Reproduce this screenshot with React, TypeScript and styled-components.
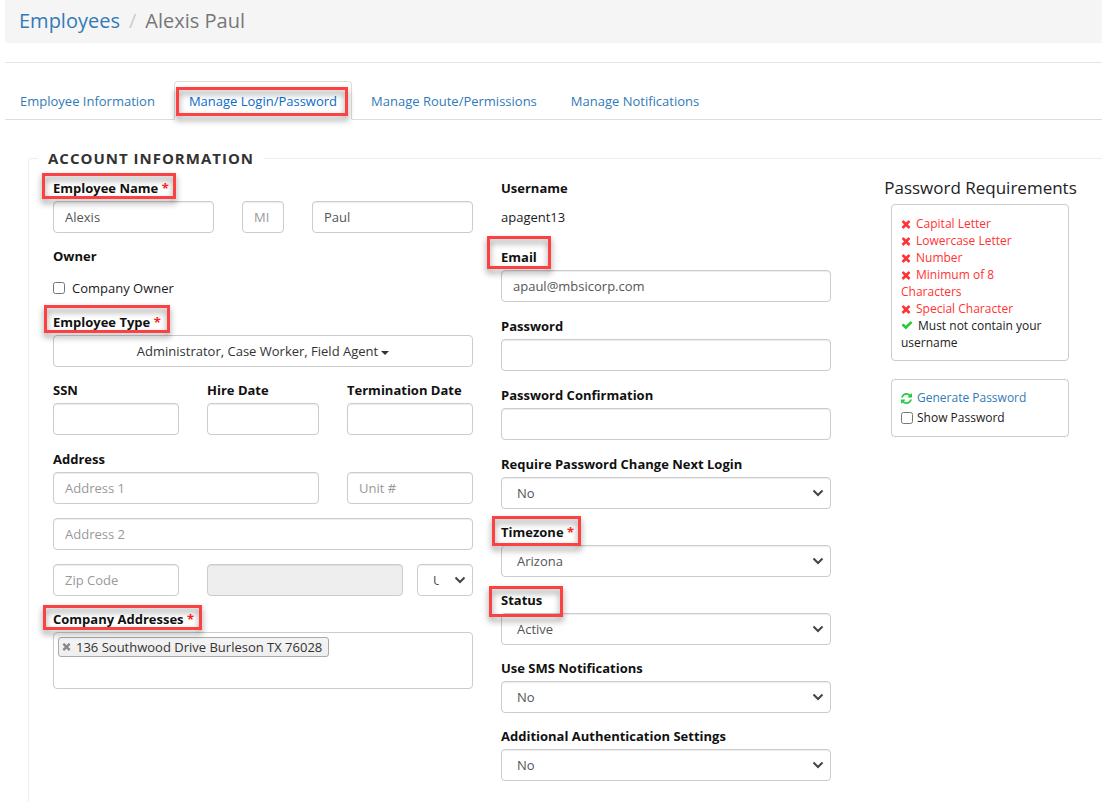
import React from "react";
import styled, { createGlobalStyle, css } from "styled-components";

const GlobalStyle = createGlobalStyle`
  *, *::before, *::after { box-sizing: border-box; }
  body {
    margin: 0;
    background: #fff;
    color: #1a1a1a;
    font-family: "Open Sans", "Liberation Sans", sans-serif;
    font-size: 13px;
    line-height: 20px;
  }
  input, select, button { font: inherit; }
  a { color: #337ab7; text-decoration: none; }
`;

/* ---------- page header ---------- */

const Page = styled.div`
  padding-left: 5px;
`;

const Breadcrumb = styled.nav`
  display: flex;
  gap: 9px;
  padding: 7px 14px 8px;
  background: #f5f5f5;
  border-radius: 0 0 0 4px;
  color: #777;
  font-size: 20px;
  line-height: 28px;
`;

const Slash = styled.span`
  color: #ccc;
`;

const Divider = styled.hr`
  height: 1px;
  margin: 19px 0 18px;
  border: 0;
  background: #e5e5e5;
`;

const Tabs = styled.nav`
  display: flex;
  gap: 4px;
  border-bottom: 1px solid #ddd;
`;

const Tab = styled.a<{ $active?: boolean }>`
  position: relative;
  margin-bottom: -1px;
  padding: 9px 14px 8px;
  border: 1px solid transparent;
  border-radius: 4px 4px 0 0;
  ${(p) =>
    p.$active &&
    css`
      color: #0a6ccb;
      background: #fff;
      border-color: #ddd #ddd #fff;
    `}
`;

/* ---------- form structure ---------- */

const Account = styled.fieldset`
  min-width: 0;
  margin: 28px 0 0 23px;
  padding: 9px 0 9px 9px;
  border: 1px solid #eee;
  border-right: 0;
  border-bottom: 0;
  border-radius: 4px 0 0 0;
`;

const Legend = styled.legend`
  padding: 0 10px;
  color: #333;
  font-size: 15px;
  font-weight: 700;
  letter-spacing: 1px;
  text-transform: uppercase;
`;

const Columns = styled.div`
  display: grid;
  grid-template-columns: minmax(0, 420fr) minmax(0, 330fr) minmax(0, 243fr);
  gap: 28px;
  margin-left: 15px;
`;

const Column = styled.div``;

const Row = styled.div<{ $tight?: boolean }>`
  display: flex;
  gap: ${(p) => (p.$tight ? 14 : 28)}px;
`;

const Stack = styled.div`
  display: flex;
  flex-direction: column;
  gap: 14px;
`;

const Cell = styled.div<{ $span: number }>`
  flex: ${(p) => p.$span} 1 0;
  min-width: 0;
`;

const Field = styled.div<{ $gap?: number }>`
  margin-bottom: ${(p) => p.$gap ?? 12}px;
`;

const labelStyle = css`
  position: relative;
  display: table;
  margin: 0 0 2px;
  color: #111;
  font-weight: 700;
  line-height: 22px;
`;

const Label = styled.label`
  ${labelStyle}
`;

const Caption = styled.div`
  ${labelStyle}
`;

const Star = styled.span`
  color: #f22;
`;

const boxStyle = css`
  display: block;
  width: 100%;
  height: 32px;
  border: 1px solid #ccc;
  border-radius: 4px;
  background: #fff;
  color: #555;
`;

const Input = styled.input`
  ${boxStyle}
  padding: 5px 11px;
  box-shadow: inset 0 1px 1px rgba(0, 0, 0, 0.075);
  &::placeholder { color: #999; opacity: 1; }
  &:disabled { background: #eee; }
`;

const SelectWrap = styled.div`
  position: relative;
`;

const SelectControl = styled.select`
  ${boxStyle}
  appearance: none;
  padding: 5px 33px 5px 15px;
  box-shadow: inset 0 1px 1px rgba(0, 0, 0, 0.075);
`;

const Chevron = styled.svg`
  position: absolute;
  top: 12px;
  right: 7px;
  fill: none;
  stroke: #444;
  stroke-width: 2;
  pointer-events: none;
`;

const TypeButton = styled.button`
  ${boxStyle}
  padding: 5px 12px;
  color: #333;
`;

const Caret = styled.span`
  display: inline-block;
  margin-left: 3px;
  vertical-align: middle;
  border-top: 4px solid;
  border-left: 4px solid transparent;
  border-right: 4px solid transparent;
`;

const StaticText = styled.p`
  margin: 0;
  padding: 6px 0;
`;

const CheckLabel = styled.label`
  display: flex;
  align-items: center;
  gap: 7px;
  padding: 9px 0;
`;

const Checkbox = styled.input`
  width: 12px;
  height: 12px;
  margin: 0;
`;

const TagBox = styled.div`
  min-height: 57px;
  padding: 3px 4px;
  border: 1px solid #ccc;
  border-radius: 4px;
`;

const Tag = styled.span`
  display: inline-flex;
  align-items: center;
  height: 20px;
  padding: 0 6px 0 3px;
  border: 1px solid #aaa;
  border-radius: 3px;
  background: linear-gradient(#f4f4f4, #eee);
  color: #333;
  line-height: 18px;
`;

const TagRemove = styled.button`
  display: flex;
  padding: 0;
  border: 0;
  background: none;
  color: #888;
`;

/* ---------- password sidebar ---------- */

const SideTitle = styled.h2`
  margin: 0 0 5px;
  color: #222;
  font-size: 17px;
  font-weight: 400;
  line-height: 22px;
  text-align: center;
`;

const Panel = styled.div<{ $tight?: boolean }>`
  margin: 0 33px 18px 32px;
  padding: ${(p) => (p.$tight ? "8px 9px" : "10px 14px 9px 9px")};
  border: 1px solid #ccc;
  border-radius: 4px;
  font-size: 12px;
  line-height: 17px;
`;

const Rules = styled.ul`
  margin: 0;
  padding: 0;
  list-style: none;
`;

const Rule = styled.li<{ $ok?: boolean }>`
  color: ${(p) => (p.$ok ? "#222" : "#f33")};
  svg { color: ${(p) => (p.$ok ? "#2c3" : "#f33")}; }
`;

const PanelLine = styled.div`
  display: flex;
  align-items: center;
  line-height: 20px;
  svg { color: #2c4; }
`;

const ShowPassword = styled.label`
  display: flex;
  align-items: center;
  gap: 4px;
  line-height: 20px;
`;

const Glyph = styled.svg`
  margin-right: 5px;
  vertical-align: -1px;
  fill: currentColor;
`;

/* ---------- red call-outs laid over the form ---------- */

const Callout = styled.span.attrs({ "aria-hidden": true })<{ $inset: string }>`
  position: absolute;
  inset: ${(p) => p.$inset};
  z-index: 1;
  border: 3px solid #fb4141;
  filter: drop-shadow(0 4px 3px rgba(0, 0, 0, 0.45));
  pointer-events: none;
`;

const TimesIcon = ({ size = 10 }: { size?: number }) => (
  <Glyph width={size} height={size} viewBox="192 192 1408 1408" aria-hidden="true">
    <path d="M1490 1322q0 40-28 68l-136 136q-28 28-68 28t-68-28l-294-294-294 294q-28 28-68 28t-68-28l-136-136q-28-28-28-68t28-68l294-294-294-294q-28-28-28-68t28-68l136-136q28-28 68-28t68 28l294 294 294-294q28-28 68-28t68 28l136 136q28 28 28 68t-28 68l-294 294 294 294q28 28 28 68z" />
  </Glyph>
);

const CheckIcon = () => (
  <Glyph width="12" height="12" viewBox="0 0 1792 1792" aria-hidden="true">
    <path d="M1671 566q0 40-28 68l-724 724-136 136q-28 28-68 28t-68-28l-136-136-362-362q-28-28-28-68t28-68l136-136q28-28 68-28t68 28l294 295 656-657q28-28 68-28t68 28l136 136q28 28 28 68z" />
  </Glyph>
);

const RefreshIcon = () => (
  <Glyph width="11" height="11" viewBox="128 128 1536 1536" aria-hidden="true">
    <path d="M1639 1056q0 5-1 7-64 268-268 434.5t-478 166.5q-146 0-282.5-55t-243.5-157l-129 129q-19 19-45 19t-45-19-19-45v-448q0-26 19-45t45-19h448q26 0 45 19t19 45-19 45l-137 137q71 66 161 102t187 36q134 0 250-65t186-179q11-17 53-117 8-23 30-23h192q13 0 22.5 9.5t9.5 22.5zm25-800v448q0 26-19 45t-45 19h-448q-26 0-45-19t-19-45 19-45l138-138q-148-137-349-137-134 0-250 65t-186 179q-11 17-53 117-8 23-30 23h-199q-13 0-22.5-9.5t-9.5-22.5v-7q65-268 270-434.5t480-166.5q146 0 284 55.5t245 156.5l130-129q19-19 45-19t45 19 19 45z" />
  </Glyph>
);

const Select = ({
  children,
  ...rest
}: React.SelectHTMLAttributes<HTMLSelectElement>) => (
  <SelectWrap>
    <SelectControl {...rest}>{children}</SelectControl>
    <Chevron width="12" height="8" viewBox="0 0 12 8" aria-hidden="true">
      <path d="M1.5 1.5 6 6l4.500-4.500" />
    </Chevron>
  </SelectWrap>
);

type SelectFieldProps = {
  id: string;
  label: string;
  value: string;
  required?: boolean;
  callout?: string;
};

const SelectField = ({ id, label, value, required, callout }: SelectFieldProps) => (
  <Field>
    <Label htmlFor={id}>
      {label}
      {required && <Star> *</Star>}
      {callout && <Callout $inset={callout} />}
    </Label>
    <Select id={id}>
      <option>{value}</option>
    </Select>
  </Field>
);

const failedRules = [
  "Capital Letter",
  "Lowercase Letter",
  "Number",
  "Minimum of 8 Characters",
  "Special Character",
];

export default function App() {
  return (
    <>
      <GlobalStyle />
      <Page>
        <Breadcrumb>
          <a href="#employees">Employees</a>
          <Slash>/</Slash>
          <span>Alexis Paul</span>
        </Breadcrumb>
        <Divider />
        <Tabs>
          <Tab href="#information">Employee Information</Tab>
          <Tab href="#login" $active>
            Manage Login/Password
            <Callout $inset="5px 3px 3px 1px" />
          </Tab>
          <Tab href="#permissions">Manage Route/Permissions</Tab>
          <Tab href="#notifications">Manage Notifications</Tab>
        </Tabs>

        <Account>
          <Legend>Account Information</Legend>
          <Columns>
            <Column>
              <Field>
                <Label htmlFor="first">
                  Employee Name<Star> *</Star>
                  <Callout $inset="-4px -7px 0 -11px" />
                </Label>
                <Row>
                  <Cell $span={161}>
                    <Input id="first" defaultValue="Alexis" />
                  </Cell>
                  <Cell $span={42}>
                    <Input placeholder="MI" aria-label="Middle initial" />
                  </Cell>
                  <Cell $span={161}>
                    <Input defaultValue="Paul" aria-label="Last name" />
                  </Cell>
                </Row>
              </Field>

              <Field $gap={4}>
                <Caption>Owner</Caption>
                <CheckLabel>
                  <Checkbox type="checkbox" />
                  Company Owner
                </CheckLabel>
              </Field>

              <Field>
                <Label htmlFor="type">
                  Employee Type<Star> *</Star>
                  <Callout $inset="-6px -9px 0 -9px" />
                </Label>
                <TypeButton id="type" type="button">
                  Administrator, Case Worker, Field Agent
                  <Caret />
                </TypeButton>
              </Field>

              <Field $gap={13}>
                <Row>
                  <Cell $span={126}>
                    <Label htmlFor="ssn">SSN</Label>
                    <Input id="ssn" />
                  </Cell>
                  <Cell $span={112}>
                    <Label htmlFor="hired">Hire Date</Label>
                    <Input id="hired" />
                  </Cell>
                  <Cell $span={126}>
                    <Label htmlFor="terminated">Termination Date</Label>
                    <Input id="terminated" />
                  </Cell>
                </Row>
              </Field>

              <Field>
                <Label htmlFor="address">Address</Label>
                <Stack>
                  <Row>
                    <Cell $span={266}>
                      <Input id="address" placeholder="Address 1" />
                    </Cell>
                    <Cell $span={126}>
                      <Input placeholder="Unit #" aria-label="Unit number" />
                    </Cell>
                  </Row>
                  <Input placeholder="Address 2" aria-label="Address 2" />
                  <Row>
                    <Cell $span={126}>
                      <Input placeholder="Zip Code" aria-label="Zip code" />
                    </Cell>
                    <Cell $span={266}>
                      <Row $tight>
                        <Cell $span={196}>
                          <Input disabled aria-label="City" />
                        </Cell>
                        <Cell $span={56}>
                          <Select aria-label="State">
                            <option>UT</option>
                          </Select>
                        </Cell>
                      </Row>
                    </Cell>
                  </Row>
                </Stack>
              </Field>

              <Field>
                <Caption>
                  Company Addresses<Star> *</Star>
                  <Callout $inset="-3px -8px 0 -10px" />
                </Caption>
                <TagBox>
                  <Tag>
                    <TagRemove type="button" aria-label="Remove address">
                      <TimesIcon size={9} />
                    </TagRemove>
                    136 Southwood Drive Burleson TX 76028
                  </Tag>
                </TagBox>
              </Field>
            </Column>

            <Column>
              <Field $gap={13}>
                <Caption>Username</Caption>
                <StaticText>apagent13</StaticText>
              </Field>
              <Field $gap={13}>
                <Label htmlFor="email">
                  Email
                  <Callout $inset="-10px -14px -1px -14px" />
                </Label>
                <Input id="email" type="email" defaultValue="apaul@mbsicorp.com" />
              </Field>
              <Field $gap={13}>
                <Label htmlFor="password">Password</Label>
                <Input id="password" type="password" />
              </Field>
              <Field $gap={13}>
                <Label htmlFor="confirm">Password Confirmation</Label>
                <Input id="confirm" type="password" />
              </Field>
              <SelectField id="change" label="Require Password Change Next Login" value="No" />
              <SelectField
                id="timezone"
                label="Timezone"
                value="Arizona"
                required
                callout="-5px -7px -3px -9px"
              />
              <SelectField
                id="status"
                label="Status"
                value="Active"
                callout="-3px -21px -6px -12px"
              />
              <SelectField id="sms" label="Use SMS Notifications" value="No" />
              <SelectField id="auth" label="Additional Authentication Settings" value="No" />
            </Column>

            <Column>
              <SideTitle>Password Requirements</SideTitle>
              <Panel>
                <Rules>
                  {failedRules.map((rule) => (
                    <Rule key={rule}>
                      <TimesIcon />
                      {rule}
                    </Rule>
                  ))}
                  <Rule $ok>
                    <CheckIcon />
                    Must not contain your username
                  </Rule>
                </Rules>
              </Panel>
              <Panel $tight>
                <PanelLine>
                  <RefreshIcon />
                  <a href="#generate">Generate Password</a>
                </PanelLine>
                <ShowPassword>
                  <Checkbox type="checkbox" />
                  Show Password
                </ShowPassword>
              </Panel>
            </Column>
          </Columns>
        </Account>
      </Page>
    </>
  );
}
